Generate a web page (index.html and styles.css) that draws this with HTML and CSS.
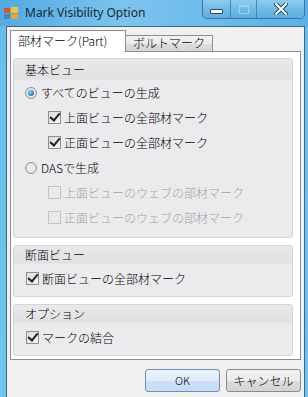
FILE: index.html
```html
<!DOCTYPE html>
<html lang="ja">
<head>
    <meta charset="UTF-8">
    <meta name="viewport" content="width=device-width, initial-scale=1.0">
    <title>Mark Visibility Option</title>
    <link rel="stylesheet" href="styles.css">
</head>
<body>
    <div class="window">
        <div class="titlebar">
            <svg class="app-icon" width="16" height="16" viewBox="0 0 16 16">
                <rect x="1" y="3" width="6" height="5" fill="#d9552b"/>
                <rect x="8" y="2" width="7" height="6" fill="#f5c431"/>
                <rect x="1" y="9" width="6" height="5" fill="#3d86c9"/>
                <rect x="8" y="9" width="7" height="5" fill="#f0a030"/>
            </svg>
            <span class="title">Mark Visibility Option</span>
            <div class="caption-buttons">
                <div class="cap cap-min"><span class="glyph-min"></span></div>
                <div class="cap cap-max"><span class="glyph-max"></span></div>
                <div class="cap cap-close">
                    <svg width="14" height="12" viewBox="0 0 14 12">
                        <path d="M2 1 L12 11 M12 1 L2 11" stroke="#2b4a66" stroke-width="4" stroke-linecap="square"/>
                        <path d="M2 1 L12 11 M12 1 L2 11" stroke="#ffffff" stroke-width="2" stroke-linecap="square"/>
                    </svg>
                </div>
            </div>
        </div>

        <div class="client">
            <div class="tabs">
                <div class="tab active">部材マーク(Part)</div>
                <div class="tab">ボルトマーク</div>
            </div>

            <div class="tab-page">
                <!-- 基本ビュー -->
                <div class="group group-main">
                    <div class="group-head">基本ビュー</div>
                    <div class="group-body">
                        <div class="row"><span class="radio checked"></span>すべてのビューの生成</div>
                        <div class="row sub"><span class="check checked"></span>上面ビューの全部材マーク</div>
                        <div class="row sub"><span class="check checked"></span>正面ビューの全部材マーク</div>
                        <div class="row"><span class="radio"></span>DASで生成</div>
                        <div class="row sub disabled"><span class="check"></span>上面ビューのウェブの部材マーク</div>
                        <div class="row sub disabled"><span class="check"></span>正面ビューのウェブの部材マーク</div>
                    </div>
                </div>

                <!-- 断面ビュー -->
                <div class="group group-small">
                    <div class="group-head">断面ビュー</div>
                    <div class="group-body">
                        <div class="row single"><span class="check checked"></span>断面ビューの全部材マーク</div>
                    </div>
                </div>

                <!-- オプション -->
                <div class="group group-small">
                    <div class="group-head">オプション</div>
                    <div class="group-body">
                        <div class="row single"><span class="check checked"></span>マークの結合</div>
                    </div>
                </div>
            </div>

            <div class="buttons">
                <div class="btn default">OK</div>
                <div class="btn">キャンセル</div>
            </div>
        </div>
    </div>
</body>
</html>
```

FILE: styles.css
```css
html, body {
    margin: 0;
    padding: 0;
}

body {
    width: 308px;
    height: 397px;
    overflow: hidden;
    font-family: "Noto Sans CJK JP", "Liberation Sans", sans-serif;
    font-size: 12px;
    font-weight: 300;
    color: #000;
}

.window {
    width: 308px;
    height: 397px;
    display: flex;
    flex-direction: column;
    background: linear-gradient(to bottom, #4aa8e2 0px, #6cbdec 30px, #72c3ee 100%);
}

/* title bar */
.titlebar {
    height: 26px;
    display: flex;
    align-items: flex-start;
    flex-shrink: 0;
    background: linear-gradient(to right, #52aae2 0%, #7cc4ee 40%, #5bb1e6 100%);
}

.app-icon {
    margin: 5px 0 0 3px;
}

.title {
    margin: 5px 0 0 6px;
    font-family: "Noto Sans", "Liberation Sans", sans-serif;
    font-size: 12px;
    font-weight: 400;
    line-height: 16px;
    color: #1b2633;
}

.caption-buttons {
    margin-left: auto;
    margin-right: 3px;
    display: flex;
    height: 18px;
    border: 1px solid #3f739b;
    border-top: none;
    border-radius: 0 0 5px 5px;
    overflow: hidden;
    box-shadow: inset 0 -1px 0 rgba(255, 255, 255, 0.4);
}

.cap {
    height: 18px;
    display: flex;
    align-items: center;
    justify-content: center;
    background: linear-gradient(to bottom, #8fcdf0 0%, #6fbbe6 50%, #5bafe0 100%);
    border-left: 1px solid #4a83ad;
}

.cap-min {
    width: 27px;
    border-left: none;
}

.cap-max {
    width: 25px;
}

.cap-close {
    width: 47px;
}

.glyph-min {
    width: 11px;
    height: 3px;
    margin-top: 5px;
    background: #fff;
    border: 1px solid #2b4a66;
    border-radius: 1px;
}

.glyph-max {
    width: 8px;
    height: 6px;
    border: 1px solid #a9d6f0;
    border-top-width: 2px;
    opacity: 0.8;
}

/* client area */
.client {
    flex: 1;
    margin: 0 3px 0 6px;
    border-left: 1px solid #3c6784;
    border-right: 1px solid #3c6784;
    border-top: 1px solid #3c6784;
    background: #f0f0f0;
    display: flex;
    flex-direction: column;
}

.tabs {
    display: flex;
    align-items: flex-end;
    height: 20px;
    margin: 4px 0 0 3px;
    position: relative;
    z-index: 1;
}

.tab {
    box-sizing: border-box;
    height: 16px;
    padding: 0 0 0 7px;
    line-height: 14px;
    border: 1px solid #8c8e94;
    border-bottom: none;
    background: linear-gradient(to bottom, #f2f2f2 0%, #ebebeb 50%, #dcdcdc 51%, #d6d6d6 100%);
    width: 88px;
    margin-left: -1px;
}

.tab.active {
    height: 22px;
    width: 116px;
    margin-left: 0;
    margin-bottom: -1px;
    padding-left: 7px;
    line-height: 20px;
    background: #fff;
}

.tab-page {
    box-sizing: border-box;
    width: 291px;
    height: 309px;
    margin-left: 3px;
    padding: 6px 0 0 2px;
    border: 1px solid #8c8e94;
    background: #fff;
}

/* group boxes */
.group {
    width: 280px;
    box-sizing: border-box;
    border: 1px solid #d5d5d8;
    border-radius: 3px;
    background: #ebebee;
    overflow: hidden;
}

.group + .group {
    margin-top: 7px;
}

.group-head {
    height: 20px;
    line-height: 21px;
    padding-left: 11px;
    background: linear-gradient(to bottom, #e9e9eb 0%, #e1e1e4 100%);
    border-bottom: 1px solid #e6e6e9;
}

.group-main .group-body {
    padding: 0 0 7px 0;
}

.group-small .group-head {
    height: 17px;
    line-height: 18px;
}

.group-small .group-body {
    padding: 2px 0 5px 0;
}

.row {
    height: 25px;
    display: flex;
    align-items: center;
    padding-left: 11px;
    white-space: nowrap;
}

.row.sub {
    padding-left: 34px;
}

.row.single {
    padding-left: 12px;
}

.row.disabled {
    color: #a3a3a3;
}

/* radio & checkbox */
.radio {
    box-sizing: border-box;
    width: 12px;
    height: 12px;
    margin-right: 4px;
    border-radius: 50%;
    border: 1px solid #8f9396;
    background: radial-gradient(circle at 50% 50%, #f2f2f2 0%, #dadada 100%);
    position: relative;
}

.radio.checked::after {
    content: "";
    position: absolute;
    left: 2px;
    top: 2px;
    width: 6px;
    height: 6px;
    border-radius: 50%;
    background: radial-gradient(circle at 40% 35%, #8ed4f5 0%, #2a86c2 60%, #1b5f94 100%);
}

.check {
    box-sizing: border-box;
    width: 13px;
    height: 13px;
    margin-right: 3px;
    border: 1px solid #8e8f91;
    background: linear-gradient(135deg, #dcdcdc 0%, #f6f6f6 100%);
    position: relative;
}

.row.disabled .check {
    border-color: #c4c4c4;
    background: #e9e9e9;
}

.check.checked::after {
    content: "";
    position: absolute;
    left: 3px;
    top: -1px;
    width: 4px;
    height: 8px;
    border: solid #222;
    border-width: 0 2px 2px 0;
    transform: rotate(40deg);
}

/* dialog buttons */
.buttons {
    display: flex;
    justify-content: flex-end;
    gap: 6px;
    margin-top: 9px;
    padding-right: 3px;
}

.btn {
    box-sizing: border-box;
    width: 75px;
    height: 23px;
    line-height: 21px;
    text-align: center;
    border: 1px solid #8a8a8a;
    border-radius: 3px;
    background: linear-gradient(to bottom, #f3f3f3 0%, #ebebeb 50%, #dddddd 51%, #d3d3d3 100%);
}

.btn.default {
    border-color: #6f8fb8;
    background: linear-gradient(to bottom, #eef5fc 0%, #dfebf9 50%, #cfe0f6 51%, #c6dbf4 100%);
    font-size: 11px;
}
```
